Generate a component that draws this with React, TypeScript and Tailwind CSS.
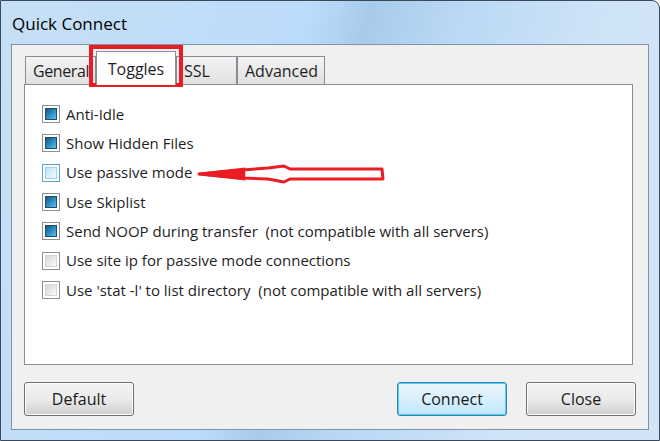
import React from 'react';

type Toggle = { label: string; state: 'on' | 'off' | 'hover' };

const toggles: Toggle[] = [
	{ label: 'Anti-Idle', state: 'on' },
	{ label: 'Show Hidden Files', state: 'on' },
	{ label: 'Use passive mode', state: 'hover' },
	{ label: 'Use Skiplist', state: 'on' },
	{ label: 'Send NOOP during transfer  (not compatible with all servers)', state: 'on' },
	{ label: 'Use site ip for passive mode connections', state: 'off' },
	{ label: "Use 'stat -l' to list directory  (not compatible with all servers)", state: 'off' }
];

const CheckBox = ({ state }: { state: Toggle['state'] }) => {
	const outer =
		state === 'hover' ? 'border-[#5da2d5]' : 'border-[#8e8f8f]';
	const inner =
		state === 'on'
			? 'border-[#1d4f73] bg-gradient-to-br from-[#16557f] via-[#2b8cc0] to-[#5dc0ec]'
			: state === 'hover'
				? 'border-[#9fd0f0] bg-gradient-to-br from-[#bfe1fa] to-[#f2fbff]'
				: 'border-[#d4d4d4] bg-gradient-to-br from-[#d6d6d6] to-[#fbfbfb]';
	return (
		<span className={`flex size-[18px] shrink-0 items-center justify-center border bg-white ${outer}`}>
			<span className={`size-[12px] border ${inner}`} />
		</span>
	);
};

const Tab = ({
	label,
	width,
	active = false,
	className = ''
}: {
	label: string;
	width: string;
	active?: boolean;
	className?: string;
}) =>
	active ? (
		<div
			className={`z-10 -mb-px flex h-[34px] justify-center border border-b-0 border-[#898c95] bg-white pt-[5px] ${width}`}
		>
			{label}
		</div>
	) : (
		<div
			className={`flex h-[28px] items-center border border-b-0 border-[#898c95] bg-gradient-to-b from-[#f4f4f4] to-[#e0e0e0] pl-[7px] ${width} ${className}`}
		>
			{label}
		</div>
	);

const WinButton = ({ label, focused = false }: { label: string; focused?: boolean }) => (
	<button
		className={`flex h-[34px] w-[110px] items-center justify-center rounded-[3px] border text-[#1a1a1a] ${
			focused
				? 'border-[#3c7fb1] bg-gradient-to-b from-[#eaf6fd] via-[#d9f0fc] to-[#bee6fd] shadow-[inset_0_0_0_1px_#48d0f4]'
				: 'border-[#707070] bg-gradient-to-b from-[#f2f2f2] via-[#ebebeb] to-[#cfcfcf] shadow-[inset_0_0_0_1px_#fbfbfb]'
		}`}
	>
		{label}
	</button>
);

export default function App() {
	return (
		<div
			className="relative h-[441px] w-[660px] overflow-hidden rounded-tr-[8px] border border-[#3b4a5a] bg-[linear-gradient(105deg,#c6dff5_0%,#bcdcfb_40%,#a9cbeb_48%,#bad9f5_60%,#d0e4f7_80%,#d2e5f7_100%)] text-[#1e1e1e]"
			style={{ fontFamily: '"Open Sans", "Noto Sans", sans-serif' }}
		>
			<div className="flex h-[43px] items-center pl-[11px] pt-[2px] text-[17px] text-black">
				Quick Connect
			</div>

			<div className="mx-[10px] flex h-[386px] flex-col border border-[#7f93a8] bg-[#f0f0f0] px-[12px] pt-[6px]">
				<div className="flex items-end pl-[1px] text-[16px]">
					<Tab label="General" width="w-[71px]" className="pl-[6px] tracking-[-0.4px]" />
					<Tab label="Toggles" width="w-[80px]" active />
					<Tab label="SSL" width="w-[61px]" />
					<Tab label="Advanced" width="w-[88px]" />
				</div>

				<div className="flex h-[281px] w-[609px] flex-col gap-[11.33px] border border-[#898c95] bg-white pl-[17px] pt-[20px] text-[15px]">
					{toggles.map(t => (
						<label key={t.label} className="flex h-[18px] items-center gap-[6px] whitespace-pre">
							<CheckBox state={t.state} />
							<span>{t.label}</span>
						</label>
					))}
				</div>

				<div className="mt-[17px] flex items-center text-[16px]">
					<WinButton label="Default" />
					<div className="ml-auto flex gap-[19px]">
						<WinButton label="Connect" focused />
						<WinButton label="Close" />
					</div>
				</div>
			</div>

			{/* annotation: red box round the Toggles tab */}
			<div className="pointer-events-none absolute left-[88px] top-[44px] h-[42px] w-[94px] border-[4px] border-[#ec1c24]" />

			{/* annotation: hand-drawn arrow */}
			<svg className="pointer-events-none absolute left-[-1px] top-[-1px]" width="660" height="441">
				<path
					d="M199 174 L242 170 L268 168 L284 166 L290 169 L382 169 L383 179 L290 179 L284 182 L268 179 L242 178 Z"
					fill="#ffffff"
					stroke="#ec1c24"
					strokeWidth="3"
					strokeLinejoin="round"
				/>
				<path d="M199 174 L244 169 L244 179 Z" fill="#ec1c24" stroke="#ec1c24" strokeWidth="2.5" />
			</svg>
		</div>
	);
}
